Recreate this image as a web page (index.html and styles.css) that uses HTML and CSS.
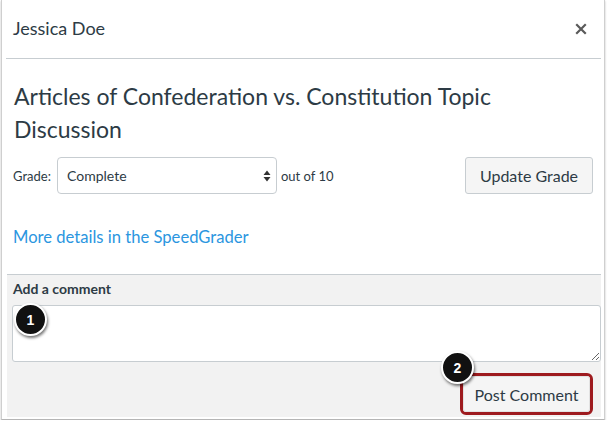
FILE: index.html
```html
<!DOCTYPE html>
<html>
<head>
<meta charset="utf-8">
<link rel="stylesheet" href="styles.css">
</head>
<body>
<div class="frame">
  <div class="header">
    <h2 class="name">Jessica Doe</h2>
    <svg class="close" width="12" height="12" viewBox="0 0 12 12"><path d="M2 2 L10 10 M10 2 L2 10" stroke="#5a5a5a" stroke-width="2.2" stroke-linecap="square"/></svg>
  </div>
  <div class="content">
    <h1 class="title">Articles of Confederation vs. Constitution Topic Discussion</h1>
    <div class="grade-row">
      <span class="label">Grade:</span>
      <div class="select">
        <span>Complete</span>
        <svg class="arrows" width="8" height="12" viewBox="0 0 8 12"><path d="M4 0.5 L7.5 5 L0.5 5 Z M4 11.5 L7.5 7 L0.5 7 Z" fill="#333"/></svg>
      </div>
      <span class="outof">out of 10</span>
      <button class="btn update">Update Grade</button>
    </div>
    <a class="link" href="#">More details in the SpeedGrader</a>
  </div>
  <div class="comment">
    <div class="comment-head">Add a comment</div>
    <div class="ta-wrap">
      <textarea class="ta"></textarea>
      <span class="badge badge1">1</span>
    </div>
    <div class="comment-foot">
      <div class="outline">
        <button class="btn post">Post Comment</button>
        <span class="badge badge2">2</span>
      </div>
    </div>
  </div>
</div>
</body>
</html>
```
FILE: styles.css
```css
* { box-sizing: border-box; }
html, body { margin: 0; padding: 0; background: #fff; }
body { font-family: Lato, "Noto Sans", sans-serif; color: #2d3b45; }

.frame {
  margin: 0 2px 0 1px;
  height: 420px;
  border-left: 1px solid #cfcfcf;
  border-right: 1px solid #cfcfcf;
  border-bottom: 1px solid #b5b5b5;
  box-shadow: 0 1px 2px rgba(0,0,0,0.25);
  padding: 0 3px 2px 4px;
  display: flex;
  flex-direction: column;
}

.header {
  height: 59px;
  border-bottom: 1px solid #c7cdd1;
  display: flex;
  align-items: center;
  justify-content: space-between;
  padding: 0 14px 0 7px;
}
.name { margin: 0; font-weight: 400; font-size: 18px; line-height: 22px; position: relative; top: -1px; }
.close { display: block; }

.content { padding: 21px 0 0 8px; flex: 1; }
.title { margin: 0; font-weight: 400; font-size: 23px; line-height: 33px; }

.grade-row {
  margin-top: 11px;
  display: flex;
  align-items: center;
  height: 37px;
}
.label { font-size: 13px; margin-left: -1px; width: 44px; }
.select {
  width: 220px;
  height: 37px;
  border: 1px solid #c7cdd1;
  border-radius: 4px;
  display: flex;
  align-items: center;
  justify-content: space-between;
  padding: 0 5px 0 9px;
  font-size: 14px;
  background: #fff;
}
.outof { font-size: 13px; margin-left: 4px; flex: 1; }
.btn {
  font-family: Lato, "Noto Sans", sans-serif;
  color: #2d3b45;
  background: #f5f5f5;
  border: 1px solid #c7cdd1;
  border-radius: 3px;
}
.update { width: 128px; height: 37px; font-size: 16px; margin-right: 8px; }

.link {
  display: block;
  margin-top: 33px;
  font-size: 16.6px;
  line-height: 20px;
  color: #2b96df;
  text-decoration: none;
  margin-left: -1px;
}

.comment {
  height: 143px;
  background: #f2f2f2;
  border-top: 1px solid #c7cdd1;
  margin-left: 1px;
  display: flex;
  flex-direction: column;
}
.comment-head {
  height: 30px;
  padding: 5px 0 0 6px;
  font-size: 14px;
  line-height: 17px;
  font-weight: 700;
}
.ta-wrap { position: relative; margin-left: 5px; height: 57px; }
.ta {
  display: block;
  width: 100%;
  height: 57px;
  border: 1px solid #c7cdd1;
  border-radius: 3px;
  background: #fff;
  resize: vertical;
  margin: 0;
}
.comment-foot {
  flex: 1;
  display: flex;
  justify-content: flex-end;
  align-items: flex-start;
  padding: 11px 8px 0 0;
}
.outline {
  position: relative;
  border: 3px solid #9e1b1f;
  border-radius: 6px;
}
.post {
  display: block;
  width: 127px;
  height: 36px;
  font-size: 16px;
  border-color: #e2e2e2;
}

.badge {
  position: absolute;
  width: 33px;
  height: 33px;
  border-radius: 50%;
  background: #111;
  border: 2px solid #fff;
  box-shadow: 1px 2px 3px rgba(0,0,0,0.55);
  color: #fff;
  font-family: "Liberation Sans", Arial, sans-serif;
  font-weight: 700;
  font-size: 14px;
  display: flex;
  align-items: center;
  justify-content: center;
}
.badge1 { left: 2px; top: -2px; }
.badge2 { left: -22px; top: -25px; }
```
